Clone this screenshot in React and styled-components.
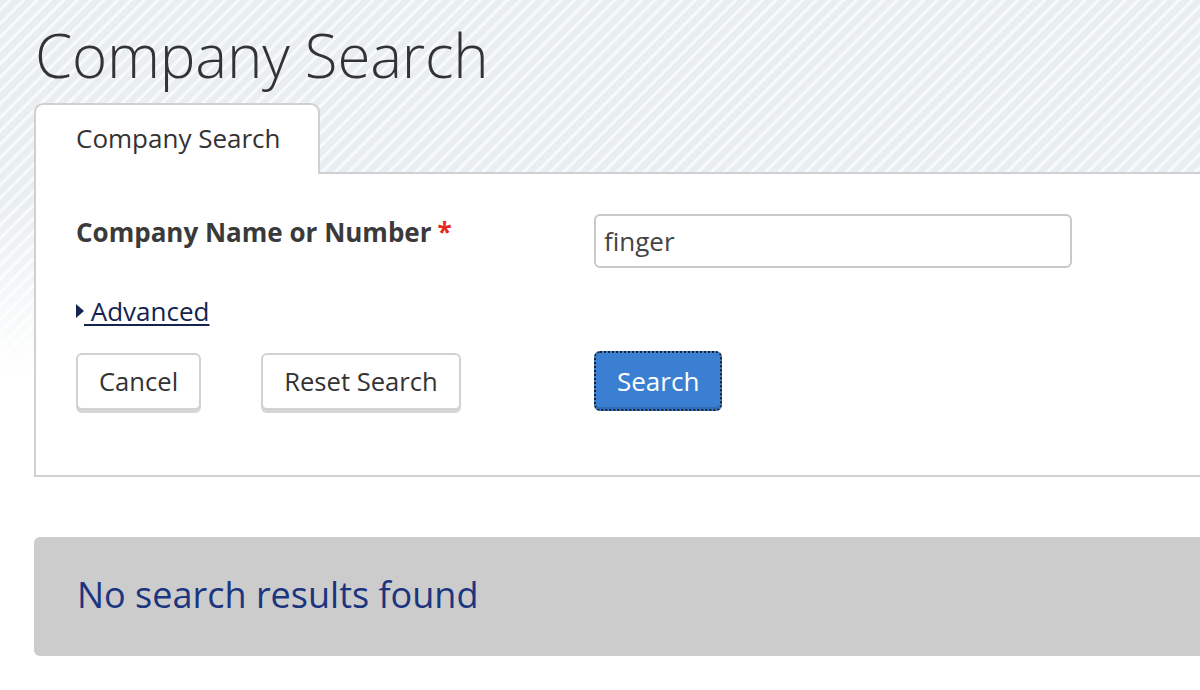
import React from "react";
import styled, { createGlobalStyle } from "styled-components";

const Global = createGlobalStyle`
  html, body { margin: 0; padding: 0; background: #fff; }
  body { font-family: "Open Sans", "Liberation Sans", sans-serif; color: #333; }
`;

const Page = styled.div`
  width: 1200px;
  height: 690px;
  overflow: hidden;
  box-sizing: border-box;
  padding-left: 34px;
  background:
    linear-gradient(to bottom, rgba(255,255,255,0) 0px, rgba(255,255,255,0) 200px, #fff 375px),
    repeating-linear-gradient(135deg, #e9eef1 0px, #e9eef1 5px, #f8fafb 6.5px, #f8fafb 8px, #e9eef1 9.5px);
`;

const Title = styled.h1`
  margin: 0;
  padding: 24px 0 0 1px;
  height: 103px;
  box-sizing: border-box;
  font-family: "Open Sans", sans-serif;
  font-weight: 300;
  font-size: 60px;
  line-height: 63px;
  color: #333;
  letter-spacing: -0.2px;
`;

const Tabs = styled.div`
  display: flex;
  height: 69px;
  box-sizing: border-box;
`;

const Tab = styled.div`
  width: 286px;
  height: 71px;
  box-sizing: border-box;
  border: 2px solid #d0d0d0;
  border-bottom: none;
  border-radius: 9px 9px 0 0;
  background: #fff;
  padding: 16px 0 0 40px;
  font-size: 26px;
  line-height: 34px;
  color: #333;
  position: relative;
  z-index: 1;
`;

const Panel = styled.div`
  margin-right: -20px;
  border: 2px solid #d0d0d0;
  border-right: none;
  background: #fff;
  padding: 40px 0 64px 40px;
  height: 305px;
  box-sizing: border-box;
`;

const FormGrid = styled.div`
  display: grid;
  grid-template-columns: 518px 478px;
`;

const Label = styled.label`
  font-weight: 700;
  font-size: 26px;
  line-height: 34px;
  color: #3a3a3a;
  padding-top: 1px;
`;

const Req = styled.span`
  color: #e5291f;
  margin-left: 6px;
`;

const Input = styled.div`
  height: 54px;
  box-sizing: border-box;
  border: 2px solid #c9c9c9;
  border-radius: 6px;
  padding: 0 8px;
  font-size: 26px;
  line-height: 50px;
  color: #444;
`;

const AdvancedRow = styled.div`
  margin-top: 26px;
  display: flex;
  align-items: center;
  height: 34px;
`;

const Caret = styled.span`
  width: 0;
  height: 0;
  border-top: 7px solid transparent;
  border-bottom: 7px solid transparent;
  border-left: 8px solid #14234f;
  margin-right: 0;
`;

const Link = styled.a`
  font-size: 26px;
  line-height: 34px;
  color: #14234f;
  text-decoration: underline;
  text-decoration-thickness: 2px;
  text-underline-offset: 3px;
  white-space: pre;
`;

const ButtonGrid = styled.div`
  display: grid;
  grid-template-columns: 518px auto;
  margin-top: 23px;
  align-items: center;
`;

const ButtonGroup = styled.div`
  display: flex;
  gap: 60px;
`;

const Button = styled.button`
  font-family: "Open Sans", sans-serif;
  font-size: ${(p) => (p.$primary ? "26px" : "25.6px")};
  height: ${(p) => (p.$primary ? "60px" : "57px")};
  padding: 0 21px;
  box-sizing: border-box;
  border-radius: 6px;
  cursor: pointer;
  ${(p) =>
    p.$primary
      ? `
    background: #3a7fd1;
    color: #fff;
    border: 2px dotted #1a2030;
    box-shadow: inset 0 -2px 0 #2f6cb5;
  `
      : `
    background: #fff;
    color: #333;
    border: 2px solid #d2d2d2;
    box-shadow: 0 3px 0 #d6d6d6;
  `}
`;

const Results = styled.div`
  margin-top: 60px;
  margin-right: -20px;
  height: 119px;
  box-sizing: border-box;
  background: #cccccc;
  border-radius: 6px 0 0 6px;
  padding: 0 0 4px 43px;
  display: flex;
  align-items: center;
  font-size: 36px;
  color: #1b3580;
`;

export default function App() {
  return (
    <>
      <Global />
      <Page>
        <Title>Company Search</Title>
        <Tabs>
          <Tab>Company Search</Tab>
        </Tabs>
        <Panel>
          <FormGrid>
            <Label>
              Company Name or Number<Req>*</Req>
            </Label>
            <Input>finger</Input>
          </FormGrid>
          <AdvancedRow>
            <Caret />
            <Link href="#">{" Advanced"}</Link>
          </AdvancedRow>
          <ButtonGrid>
            <ButtonGroup>
              <Button>Cancel</Button>
              <Button>Reset Search</Button>
            </ButtonGroup>
            <div>
              <Button $primary>Search</Button>
            </div>
          </ButtonGrid>
        </Panel>
        <Results>No search results found</Results>
      </Page>
    </>
  );
}
